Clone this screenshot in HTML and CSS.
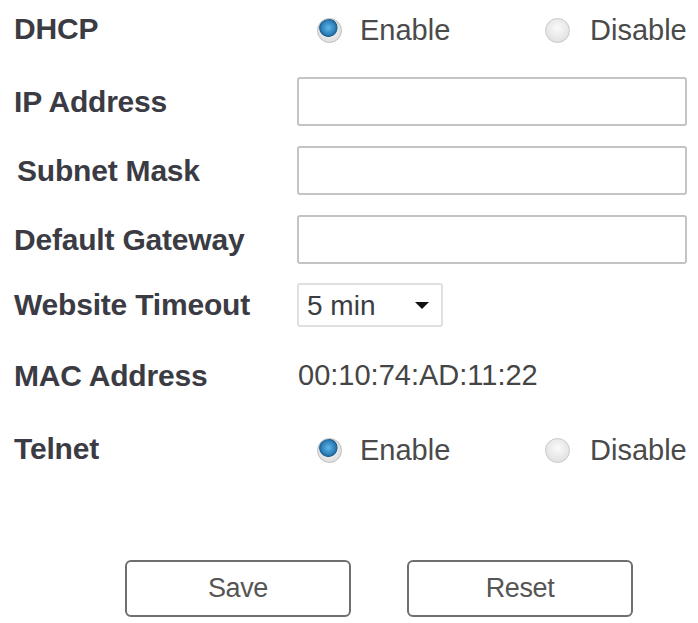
FILE: index.html
```html
<!DOCTYPE html>
<html lang="en">
<head>
  <meta charset="UTF-8" />
  <meta name="viewport" content="width=device-width, initial-scale=1.0" />
  <title>Network Settings</title>
  <link rel="stylesheet" href="styles.css">
</head>
<body>

  <form class="settings">
    <div class="row row-dhcp">
      <label class="label">DHCP</label>
      <div class="radios">
        <label class="radio"><input type="radio" name="dhcp" checked /> Enable</label>
        <label class="radio radio-off"><input type="radio" name="dhcp" /> Disable</label>
      </div>
    </div>

    <div class="row">
      <label class="label" for="ip">IP Address</label>
      <input class="field" type="text" id="ip" />
    </div>

    <div class="row">
      <label class="label label-indent" for="mask">Subnet Mask</label>
      <input class="field" type="text" id="mask" />
    </div>

    <div class="row">
      <label class="label" for="gateway">Default Gateway</label>
      <input class="field" type="text" id="gateway" />
    </div>

    <div class="row row-short">
      <label class="label" for="timeout">Website Timeout</label>
      <span class="select-wrap">
        <select id="timeout" class="select">
          <option>5 min</option>
          <option>10 min</option>
          <option>30 min</option>
        </select>
      </span>
    </div>

    <div class="row row-spaced">
      <span class="label">MAC Address</span>
      <span class="value">00:10:74:AD:11:22</span>
    </div>

    <div class="row row-spaced">
      <label class="label">Telnet</label>
      <div class="radios">
        <label class="radio"><input type="radio" name="telnet" checked /> Enable</label>
        <label class="radio radio-off"><input type="radio" name="telnet" /> Disable</label>
      </div>
    </div>

    <div class="buttons">
      <button type="button" class="btn">Save</button>
      <button type="reset" class="btn">Reset</button>
    </div>
  </form>

</body>
</html>
```

FILE: styles.css
```css
body {
  font-family: "Liberation Sans", Arial, sans-serif;
  background: #fff;
  margin: 0;
  padding: 0;
  color: #444;
}

.settings {
  display: flex;
  flex-direction: column;
  gap: 20px;
  padding: 4px 0 0 14px;
}

.row {
  display: flex;
  align-items: center;
  height: 49px;
}

.row-dhcp {
  margin-bottom: 4px;
}

.row-short {
  height: 44px;
  margin-top: -1px;
}

.row-spaced {
  margin-top: 4px;
}

.label {
  width: 283px;
  flex-shrink: 0;
  font-size: 30px;
  font-weight: bold;
  color: #3b3b44;
  letter-spacing: -0.2px;
}

.label-indent {
  padding-left: 3px;
  width: 280px;
}

.value {
  font-size: 29px;
  color: #454545;
  padding-left: 1px;
}

.field {
  width: 390px;
  height: 49px;
  box-sizing: border-box;
  border: 2px solid #c4c4c4;
  border-radius: 3px;
  background: #fff;
  font-size: 24px;
  padding: 0 8px;
}

.radios {
  display: flex;
  align-items: center;
  padding-left: 20px;
  margin-top: 3px;
}

.radio {
  display: flex;
  align-items: center;
  gap: 18px;
  font-size: 29px;
  color: #4a4a4a;
  width: 228px;
}

.radio-off {
  gap: 20px;
  width: auto;
}

.radio input {
  appearance: none;
  -webkit-appearance: none;
  margin: 0;
  width: 25px;
  height: 25px;
  border-radius: 50%;
  border: 1px solid #c9c9c9;
  background: radial-gradient(circle at 50% 40%, #fafafa 0%, #e3e3e3 70%, #d2d2d2 100%);
  box-sizing: border-box;
}

.radio input:checked {
  background:
    radial-gradient(circle at 45% 38%, #5fb6e8 0%, #2d7fb8 36%, #1b5f92 46%, rgba(0,0,0,0) 50%),
    radial-gradient(circle, #f4f4f4 0%, #dcdcdc 85%, #c8c8c8 100%);
  border-color: #bdbdbd;
}

.select-wrap {
  position: relative;
  display: inline-block;
}

.select-wrap::after {
  content: "";
  position: absolute;
  right: 14px;
  top: 19px;
  border-left: 7px solid transparent;
  border-right: 7px solid transparent;
  border-top: 7px solid #111;
  pointer-events: none;
}

.select {
  appearance: none;
  -webkit-appearance: none;
  width: 146px;
  height: 44px;
  border: 2px solid #e0e0e0;
  border-radius: 3px;
  background: #fff;
  font-family: inherit;
  font-size: 28px;
  color: #3c3c44;
  padding: 0 0 0 8px;
}

.buttons {
  display: flex;
  gap: 56px;
  padding-left: 111px;
  margin-top: 67px;
}

.btn {
  width: 226px;
  height: 57px;
  box-sizing: border-box;
  border: 2px solid #6f6f6f;
  border-radius: 6px;
  background: #fff;
  font-family: inherit;
  font-size: 27px;
  color: #555;
  letter-spacing: -0.4px;
  cursor: pointer;
}
```
